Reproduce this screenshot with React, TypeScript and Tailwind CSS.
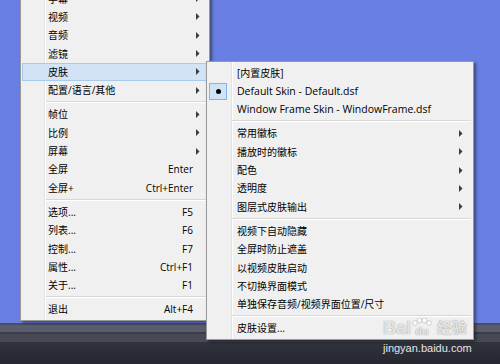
type Item = {
  label?: string
  shortcut?: string
  arrow?: boolean
  sep?: boolean
  active?: boolean
  checked?: boolean
  latin?: boolean
}

const mainItems: Item[] = [
  { label: "字幕", arrow: true },
  { label: "视频", arrow: true },
  { label: "音频", arrow: true },
  { label: "滤镜", arrow: true },
  { label: "皮肤", arrow: true, active: true },
  { label: "配置/语言/其他", arrow: true },
  { sep: true },
  { label: "帧位", arrow: true },
  { label: "比例", arrow: true },
  { label: "屏幕", arrow: true },
  { label: "全屏", shortcut: "Enter" },
  { label: "全屏+", shortcut: "Ctrl+Enter" },
  { sep: true },
  { label: "选项...", shortcut: "F5" },
  { label: "列表...", shortcut: "F6" },
  { label: "控制...", shortcut: "F7" },
  { label: "属性...", shortcut: "Ctrl+F1" },
  { label: "关于...", shortcut: "F1" },
  { sep: true },
  { label: "退出", shortcut: "Alt+F4" },
]

const skinItems: Item[] = [
  { label: "[内置皮肤]" },
  { label: "Default Skin - Default.dsf", checked: true, latin: true },
  { label: "Window Frame Skin - WindowFrame.dsf", latin: true },
  { sep: true },
  { label: "常用徽标", arrow: true },
  { label: "播放时的徽标", arrow: true },
  { label: "配色", arrow: true },
  { label: "透明度", arrow: true },
  { label: "图层式皮肤输出", arrow: true },
  { sep: true },
  { label: "视频下自动隐藏" },
  { label: "全屏时防止遮盖" },
  { label: "以视频皮肤启动" },
  { label: "不切换界面模式" },
  { label: "单独保存音频/视频界面位置/尺寸" },
  { sep: true },
  { label: "皮肤设置..." },
]

function Arrow() {
  return (
    <svg width="4" height="7" viewBox="0 0 4 7" className="block">
      <path d="M0 0 L3.5 3.5 L0 7 Z" fill="#3c3c3c" />
    </svg>
  )
}

function MenuRows({ items, textPad, arrowPad, shortcutPad }: { items: Item[]; textPad: string; arrowPad: string; shortcutPad: string }) {
  return (
    <>
      {items.map((it, i) =>
        it.sep ? (
          <div key={i} className="ml-[25px] mr-[2px] flex h-[5.83px] flex-col justify-center">
            <div className="h-px bg-[#d7d7d7]" />
            <div className="h-px bg-white" />
          </div>
        ) : (
          <div
            key={i}
            className={
              "relative ml-px mr-[2px] flex h-[18.33px] items-center border " +
              (it.active ? "border-[#a8caee] bg-[#d1e3f5]" : "border-transparent")
            }
          >
            {it.checked && (
              <div className="absolute left-0 top-[0.5px] flex h-[17px] w-[18px] items-center justify-center border border-[#80b6ea] bg-[#cfe3f6]">
                <div className="h-[5px] w-[5px] rounded-full bg-black" />
              </div>
            )}
            <span className={textPad + " whitespace-nowrap leading-none " + (it.latin ? "text-[10.5px]" : "")}>{it.label}</span>
            {it.shortcut && <span className={"ml-auto leading-none " + shortcutPad}>{it.shortcut}</span>}
            {it.arrow && <span className={"ml-auto " + arrowPad}><Arrow /></span>}
          </div>
        )
      )}
    </>
  )
}

export default function App() {
  return (
    <div
      className="relative flex h-[364px] w-[500px] flex-col overflow-hidden text-[10px] text-black"
      style={{ fontFamily: '"Open Sans", "Noto Sans CJK SC", sans-serif' }}
    >
      <div className="flex-1 bg-[#6a7fe3]" />
      <div className="h-[2px] bg-[#4b4f66]" />
      <div className="h-[7px] bg-[#5a5d6b]" />
      <div className="h-[2px] bg-[#3b3d48]" />
      <div className="h-[8px] bg-[#474955]" />
      <div className="h-[22px] bg-gradient-to-b from-[#31333d] to-[#25262f]" />

      {/* main context menu */}
      <div className="absolute left-[20px] top-[-13.5px] w-[190px] border border-[#9a9a9a] bg-[#f0f0f0] bg-[linear-gradient(to_right,transparent_23px,#e2e3e3_23px,#e2e3e3_24px,#ffffff_24px,#ffffff_25px,transparent_25px)] pb-[1px] pt-[2px] shadow-[2px_2px_3px_rgba(0,0,0,0.45)]">
        <MenuRows items={mainItems} textPad="pl-[25px]" arrowPad="pr-[6px]" shortcutPad="pr-[13px]" />
      </div>

      {/* skin submenu */}
      <div className="absolute left-[206px] top-[61px] w-[268px] border border-[#9a9a9a] bg-[#f0f0f0] bg-[linear-gradient(to_right,transparent_24px,#e2e3e3_24px,#e2e3e3_25px,#ffffff_25px,#ffffff_26px,transparent_26px)] pb-[1.3px] pt-[1.5px] shadow-[2px_2px_3px_rgba(0,0,0,0.45)]">
        <MenuRows items={skinItems} textPad="pl-[28px]" arrowPad="pr-[7px]" shortcutPad="pr-[13px]" />
      </div>

      {/* watermark */}
      <div className="pointer-events-none absolute left-[383px] top-[318px] flex items-center text-[18px] font-bold leading-none text-white/80 [text-shadow:0_0_1px_rgba(0,0,0,0.55)]" style={{ fontFamily: '"Liberation Sans", "Noto Sans CJK SC", sans-serif' }}>
        <span>Bai</span>
        <span className="relative flex h-[19px] w-[22px] items-end justify-center">
          <svg width="22" height="8" viewBox="0 0 22 8" className="absolute left-0 top-0">
            <circle cx="4" cy="5" r="2.4" fill="rgba(255,255,255,0.85)" stroke="rgba(0,0,0,0.25)" strokeWidth="0.6" />
            <circle cx="8.5" cy="2.5" r="2.4" fill="rgba(255,255,255,0.85)" stroke="rgba(0,0,0,0.25)" strokeWidth="0.6" />
            <circle cx="13.5" cy="2.5" r="2.4" fill="rgba(255,255,255,0.85)" stroke="rgba(0,0,0,0.25)" strokeWidth="0.6" />
            <circle cx="18" cy="5" r="2.4" fill="rgba(255,255,255,0.85)" stroke="rgba(0,0,0,0.25)" strokeWidth="0.6" />
          </svg>
          <span className="text-[11px]">du</span>
        </span>
        <span className="ml-[4px] text-[15px]">经验</span>
      </div>
      <div className="pointer-events-none absolute left-[383px] top-[343px] text-[11px] leading-none text-[#e4e4e8]" style={{ fontFamily: '"Liberation Sans", sans-serif' }}>
        jingyan.baidu.com
      </div>
    </div>
  )
}
